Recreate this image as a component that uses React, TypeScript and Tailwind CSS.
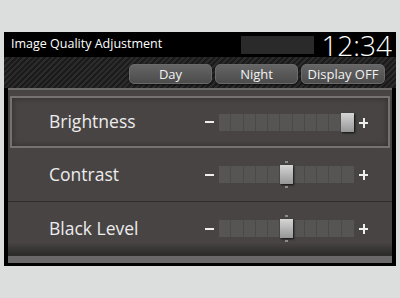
const font = { fontFamily: "'Open Sans', 'Noto Sans', sans-serif" };

type SliderRowProps = {
  label: string;
  value: number;
  selected?: boolean;
  ticks?: boolean;
};

const SEGMENTS = 11;

function SliderRow({ label, value, selected, ticks }: SliderRowProps) {
  return (
    <div
      className={`flex items-center justify-between ${
        selected
          ? "mx-[2px] h-[52px] border-2 border-[#767272] pl-[37px] pr-[20px] shadow-[inset_0_0_6px_rgba(0,0,0,0.35)]"
          : "h-[54px] border-b border-[#2f2c2c] pl-[41px] pr-[24px]"
      }`}
    >
      <span className="text-[17.5px] leading-none text-[#ececec]">{label}</span>
      <div className="flex items-center gap-[5px]">
        <span className="h-[2px] w-[9px] bg-[#eeeeee]" />
        <div className="relative h-[17px] w-[135px]">
          <div className="grid h-full grid-cols-11 bg-[#575454]">
            {Array.from({ length: SEGMENTS }).map((_, i) => (
              <div key={i} className="border-r border-[#4c4949] last:border-r-0" />
            ))}
          </div>
          <div
            className="absolute top-[-1px] h-[19px] w-[13px] bg-gradient-to-b from-[#d6d6d6] to-[#969696] shadow-[1px_1px_2px_rgba(0,0,0,0.8)]"
            style={{ left: `${Math.min((value * 135) / SEGMENTS, 122)}px` }}
          />
          {ticks && (
            <>
              <div
                className="absolute top-[-5px] h-[2px] w-[3px] bg-[#8c8a8a]"
                style={{ left: `${(value * 135) / SEGMENTS + 5}px` }}
              />
              <div
                className="absolute bottom-[-5px] h-[2px] w-[3px] bg-[#8c8a8a]"
                style={{ left: `${(value * 135) / SEGMENTS + 5}px` }}
              />
            </>
          )}
        </div>
        <span className="relative h-[9px] w-[9px]">
          <span className="absolute left-0 top-[4px] h-[2px] w-[9px] bg-[#eeeeee]" />
          <span className="absolute left-[3.5px] top-0 h-[10px] w-[2px] bg-[#eeeeee]" />
        </span>
      </div>
    </div>
  );
}

function ModeButton({ label, width }: { label: string; width: string }) {
  return (
    <button
      type="button"
      className={`${width} h-[20px] rounded-[5px] border border-[#6a6a6a] bg-gradient-to-b from-[#656565] to-[#4c4c4c] text-[13px] leading-none text-[#f2f2f2] shadow-[0_1px_2px_rgba(0,0,0,0.6)]`}
    >
      {label}
    </button>
  );
}

export default function App() {
  return (
    <div className="h-[298px] w-[400px] bg-[#dcdedd] pl-[4px] pt-[32px]" style={font}>
      <div className="flex h-[234px] w-[392px] flex-col bg-black">
        <header className="flex h-[25px] items-center">
          <span className="pl-[7px] text-[12.5px] leading-none text-white">
            Image Quality Adjustment
          </span>
          <div className="ml-auto mr-[7px] h-[18px] w-[73px] bg-[#2a2a2a]" />
          <span className="pr-[4px] text-[28px] font-light leading-none text-white">
            12:34
          </span>
        </header>

        <div className="flex h-[31px] items-start justify-end gap-[3px] bg-[repeating-linear-gradient(135deg,#1b1b1b_0px,#1b1b1b_2px,#2b2b2b_2px,#2b2b2b_4px)] pr-[11px] pt-[7px]">
          <ModeButton label="Day" width="w-[83px]" />
          <ModeButton label="Night" width="w-[83px]" />
          <ModeButton label="Display OFF" width="w-[84px]" />
        </div>

        <div className="mx-[4px] flex flex-col border-t-2 border-[#6d6a6a] bg-[#484444] pt-[6px]">
          <SliderRow label="Brightness" value={10} selected />
          <SliderRow label="Contrast" value={5} ticks />
          <div className="bg-gradient-to-b from-[#484444] from-75% to-[#2a2828]">
            <SliderRow label="Black Level" value={5} ticks />
          </div>
          <div className="h-[7px] bg-[#6a6868]" />
        </div>
      </div>
    </div>
  );
}
